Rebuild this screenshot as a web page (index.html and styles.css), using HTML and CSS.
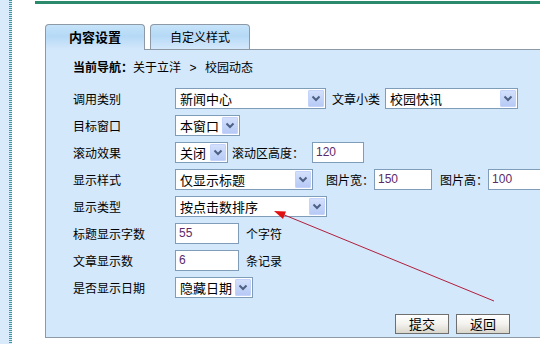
FILE: index.html
```html
<!DOCTYPE html>
<html lang="zh-CN">
<head>
  <meta charset="UTF-8">
  <title>内容设置</title>
  <link rel="stylesheet" href="styles.css">
</head>
<body>
  <div class="page">
    <div class="sidebar"></div>

    <div class="main">
      <div class="tabs">
        <div class="tab active">内容设置</div>
        <div class="tab">自定义样式</div>
      </div>

      <div class="panel">
        <div class="nav"><b>当前导航<span class="colon">：</span></b>关于立洋<span class="sep">&gt;</span>校园动态</div>

        <div class="form">
          <div class="row">
            <span class="label">调用类别</span>
            <span class="sel w-151"><span class="sel-text">新闻中心</span><span class="sel-btn"><svg width="16" height="17" viewBox="0 0 16 17"><path d="M4.5 6.5 8 10l3.5-3.5" fill="none" stroke="#4d6185" stroke-width="2"/></svg></span></span>
            <span class="txt ml-6">文章小类</span>
            <span class="sel w-133 ml-5"><span class="sel-text">校园快讯</span><span class="sel-btn"><svg width="16" height="17" viewBox="0 0 16 17"><path d="M4.5 6.5 8 10l3.5-3.5" fill="none" stroke="#4d6185" stroke-width="2"/></svg></span></span>
          </div>

          <div class="row">
            <span class="label">目标窗口</span>
            <span class="sel w-65"><span class="sel-text">本窗口</span><span class="sel-btn"><svg width="16" height="17" viewBox="0 0 16 17"><path d="M4.5 6.5 8 10l3.5-3.5" fill="none" stroke="#4d6185" stroke-width="2"/></svg></span></span>
          </div>

          <div class="row">
            <span class="label">滚动效果</span>
            <span class="sel w-53"><span class="sel-text">关闭</span><span class="sel-btn"><svg width="16" height="17" viewBox="0 0 16 17"><path d="M4.5 6.5 8 10l3.5-3.5" fill="none" stroke="#4d6185" stroke-width="2"/></svg></span></span>
            <span class="txt ml-4">滚动区高度<span class="colon">：</span></span>
            <span class="inp w-52 ml-8">120</span>
          </div>

          <div class="row">
            <span class="label">显示样式</span>
            <span class="sel w-138"><span class="sel-text">仅显示标题</span><span class="sel-btn"><svg width="16" height="17" viewBox="0 0 16 17"><path d="M4.5 6.5 8 10l3.5-3.5" fill="none" stroke="#4d6185" stroke-width="2"/></svg></span></span>
            <span class="txt ml-13">图片宽<span class="colon">：</span></span>
            <span class="inp w-58">150</span>
            <span class="txt ml-8">图片高<span class="colon">：</span></span>
            <span class="inp w-60">100</span>
          </div>

          <div class="row">
            <span class="label">显示类型</span>
            <span class="sel w-152"><span class="sel-text">按点击数排序</span><span class="sel-btn"><svg width="16" height="17" viewBox="0 0 16 17"><path d="M4.5 6.5 8 10l3.5-3.5" fill="none" stroke="#4d6185" stroke-width="2"/></svg></span></span>
          </div>

          <div class="row">
            <span class="label">标题显示字数</span>
            <span class="inp w-64">55</span>
            <span class="txt ml-7">个字符</span>
          </div>

          <div class="row">
            <span class="label">文章显示数</span>
            <span class="inp w-64">6</span>
            <span class="txt ml-7">条记录</span>
          </div>

          <div class="row">
            <span class="label">是否显示日期</span>
            <span class="sel w-78"><span class="sel-text">隐藏日期</span><span class="sel-btn"><svg width="16" height="17" viewBox="0 0 16 17"><path d="M4.5 6.5 8 10l3.5-3.5" fill="none" stroke="#4d6185" stroke-width="2"/></svg></span></span>
          </div>
        </div>

        <div class="actions">
          <button>提交</button>
          <button>返回</button>
        </div>
      </div>
    </div>

    <!-- annotation arrow drawn over the form -->
    <svg class="arrow" width="540" height="344" viewBox="0 0 540 344">
      <line x1="494" y1="301" x2="282" y2="214" stroke="#b01e3c" stroke-width="1"/>
      <polygon points="274,211 286,211.5 283,219" fill="#e01010"/>
    </svg>
  </div>
</body>
</html>
```

FILE: styles.css
```css
* {
  margin: 0;
  padding: 0;
  box-sizing: border-box;
}

html, body {
  overflow: hidden;
}

body {
  font-family: "Noto Sans CJK SC", "Liberation Sans", sans-serif;
  font-size: 12px;
  color: #000;
  background: #fff;
  width: 540px;
  height: 344px;
}

.page {
  position: relative;
  display: flex;
  height: 344px;
  overflow: hidden;
}

.sidebar {
  width: 12px;
  flex: none;
  background: repeating-linear-gradient(to bottom, #3f9aa0 0 1px, transparent 1px 2px) 9px 0 / 3px 100% no-repeat, #d9eafb;
}

/* the form panel is wider than the window; clip it at the right edge */
.main {
  flex: none;
  width: 505px;
  margin: 1px 0 0 23px;
  border-top: 3px solid #2b8a6b;
  padding: 20px 0 0 10px;
  overflow: hidden;
}

.tabs {
  display: flex;
  align-items: flex-start;
  gap: 5px;
  height: 25px;
}

.tab {
  width: 100px;
  height: 25px;
  border: 1px solid #8d99a6;
  border-bottom: none;
  border-radius: 4px 4px 0 0;
  background: linear-gradient(#c6e3f9, #b5d9f6 45%, #d4e8fb);
  text-align: center;
  line-height: 24px;
  font-size: 12px;
}

.tab.active {
  position: relative;
  z-index: 1;
  height: 26px;
  margin-bottom: -1px;
  font-weight: bold;
  font-size: 13px;
}

.panel {
  width: 540px;
  border: 1px solid #8d99a6;
  background: #d4e8fb;
  padding: 8px 0 3px 27px;
}

.nav {
  height: 18px;
  line-height: 18px;
  white-space: nowrap;
}

.colon {
  display: inline-block;
  width: 12px;
  text-align: center;
}

.sep {
  display: inline-block;
  width: 24px;
  text-align: center;
  font-family: "Liberation Sans", sans-serif;
}

.form {
  margin-top: 9px;
}

.row {
  display: flex;
  align-items: center;
  height: 27px;
  white-space: nowrap;
}

.label {
  width: 102px;
  flex: none;
  line-height: 16px;
}

.txt {
  line-height: 16px;
}

.sel {
  display: flex;
  align-items: center;
  flex: none;
  height: 21px;
  border: 1px solid #7f9db9;
  background: #fff;
  font-size: 13px;
  padding-left: 4px;
}

.sel-text {
  flex: 1;
  line-height: 19px;
  overflow: hidden;
}

.sel-btn {
  width: 16px;
  height: 17px;
  margin: 0 1px;
  border: 1px solid #c3d3fb;
  border-radius: 1px;
  background: linear-gradient(#d3e0fc, #b7caf5);
  display: flex;
}

.sel-btn svg {
  margin: -1px;
}

.inp {
  flex: none;
  height: 21px;
  border: 1px solid #7f9db9;
  background: #fff;
  font-family: "Liberation Sans", sans-serif;
  font-size: 12px;
  line-height: 19px;
  color: #5b2a6b;
  padding-left: 3px;
}

.w-151 { width: 151px; }
.w-133 { width: 133px; }
.w-65 { width: 65px; }
.w-53 { width: 53px; }
.w-138 { width: 138px; }
.w-152 { width: 152px; }
.w-78 { width: 78px; }
.w-52 { width: 52px; }
.w-58 { width: 58px; }
.w-60 { width: 60px; }
.w-64 { width: 64px; }

.ml-4 { margin-left: 4px; }
.ml-5 { margin-left: 5px; }
.ml-6 { margin-left: 6px; }
.ml-7 { margin-left: 7px; }
.ml-8 { margin-left: 8px; }
.ml-13 { margin-left: 13px; }

.actions {
  display: flex;
  gap: 7px;
  margin: 13px 0 0 322px;
}

button {
  width: 54px;
  height: 20px;
  border: 1px solid #6f6f6f;
  background: linear-gradient(#ffffff, #f3f2ee 50%, #d9d6cb);
  font-family: inherit;
  font-size: 13px;
  line-height: 18px;
  color: #000;
}

.arrow {
  position: absolute;
  top: 0;
  left: 0;
  pointer-events: none;
}
```
